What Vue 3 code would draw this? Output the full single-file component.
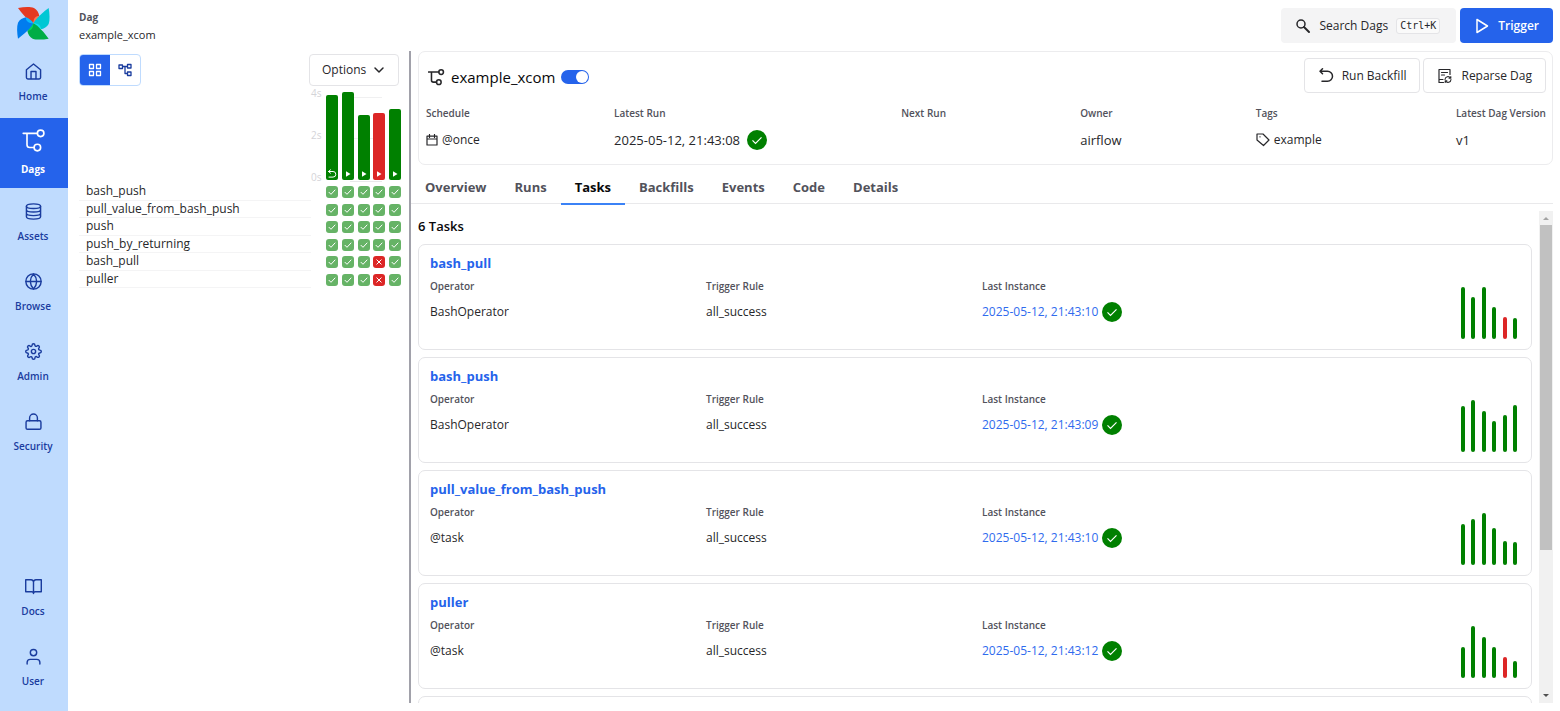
<script setup>
import { ref } from 'vue'

const enabled = ref(true)

const navTop = [
  { label: 'Home', icon: 'home' },
  { label: 'Dags', icon: 'dag' },
  { label: 'Assets', icon: 'assets' },
  { label: 'Browse', icon: 'browse' },
  { label: 'Admin', icon: 'admin' },
  { label: 'Security', icon: 'security' },
]
const navBottom = [
  { label: 'Docs', icon: 'docs' },
  { label: 'User', icon: 'user' },
]

const blades = [
  { angle: 0, dark: '#e43921', light: '#ff7557' },
  { angle: 90, dark: '#00c7d4', light: '#11e1ee' },
  { angle: 180, dark: '#00ad46', light: '#04d659' },
  { angle: 270, dark: '#017cee', light: '#0cb6ff' },
]

const runs = [
  { height: 85, state: 'ok', backfill: true },
  { height: 88, state: 'ok' },
  { height: 65, state: 'ok' },
  { height: 67, state: 'bad' },
  { height: 71, state: 'ok' },
]

const gridTasks = [
  { name: 'bash_push', states: [1, 1, 1, 1, 1] },
  { name: 'pull_value_from_bash_push', states: [1, 1, 1, 1, 1] },
  { name: 'push', states: [1, 1, 1, 1, 1] },
  { name: 'push_by_returning', states: [1, 1, 1, 1, 1] },
  { name: 'bash_pull', states: [1, 1, 1, 0, 1] },
  { name: 'puller', states: [1, 1, 1, 0, 1] },
]

const tabs = ['Overview', 'Runs', 'Tasks', 'Backfills', 'Events', 'Code', 'Details']

// Negative bar values mark failed runs.
const tasks = [
  { name: 'bash_pull', operator: 'BashOperator', last: '2025-05-12, 21:43:10', bars: [52, 42, 52, 32, -22, 21] },
  { name: 'bash_push', operator: 'BashOperator', last: '2025-05-12, 21:43:09', bars: [46, 52, 41, 31, 37, 47] },
  { name: 'pull_value_from_bash_push', operator: '@task', last: '2025-05-12, 21:43:10', bars: [41, 46, 52, 37, 24, 23] },
  { name: 'puller', operator: '@task', last: '2025-05-12, 21:43:12', bars: [31, 52, 41, 31, -21, 17] },
]
const pendingCards = 2
</script>

<template>
  <div class="app">
    <nav class="sidebar" aria-label="Main">
      <a href="#" class="logo" aria-label="Airflow">
        <svg viewBox="0 0 126 126" width="42" height="42">
          <g v-for="b in blades" :key="b.angle" :transform="`rotate(${b.angle} 64 64)`">
            <path :fill="b.dark" d="M64 64C56 60 42 50 18 18C36 15 54 14 66 18C75 23 80 32 82 42C74 43 68 52 64 64Z" />
            <path :fill="b.light" d="M64 64C64 50 70 41 82 42C78 51 72 60 64 64Z" />
          </g>
        </svg>
      </a>
      <template v-for="(group, gi) in [navTop, navBottom]" :key="gi">
        <div v-if="gi === 1" class="spacer"></div>
        <a v-for="item in group" :key="item.label" href="#" class="nav-item" :class="{ active: item.icon === 'dag' }">
          <svg v-if="item.icon === 'dag'" class="line" viewBox="-1 0 22 22" width="24" height="24">
            <path d="M1 4H14M4.500 4V14.500Q4.500 17 7 17H11" /><circle cx="17" cy="4" r="3" /><circle cx="14" cy="17" r="3" />
          </svg>
          <svg v-else class="line" viewBox="0 0 24 24" width="17" height="17">
            <template v-if="item.icon === 'home'">
              <path d="M2 9.500 12 1.500l10 8V20.500a2 2 0 0 1-2 2H4a2 2 0 0 1-2-2z" /><path d="M8.500 22V12h7v10" />
            </template>
            <template v-else-if="item.icon === 'assets'">
              <ellipse cx="12" cy="4.500" rx="10" ry="3.300" /><path d="M2 4.500v15c0 1.800 4.500 3.300 10 3.300s10-1.500 10-3.300v-15M2 9.500c0 1.800 4.500 3.300 10 3.300s10-1.500 10-3.300M2 14.500c0 1.800 4.500 3.300 10 3.300s10-1.500 10-3.300" />
            </template>
            <template v-else-if="item.icon === 'browse'">
              <circle cx="12" cy="12" r="10.800" /><path d="M1.500 12h21M12 1.500a16 16 0 0 1 4.500 10.500A16 16 0 0 1 12 22.500 16 16 0 0 1 7.500 12 16 16 0 0 1 12 1.500z" />
            </template>
            <template v-else-if="item.icon === 'admin'">
              <circle cx="12" cy="12" r="3" />
              <path d="M19.400 15a1.650 1.650 0 0 0 .33 1.820l.06.06a2 2 0 1 1-2.830 2.830l-.06-.06a1.650 1.650 0 0 0-1.820-.33 1.650 1.650 0 0 0-1 1.510V21a2 2 0 0 1-4 0v-.09A1.650 1.650 0 0 0 9 19.400a1.650 1.650 0 0 0-1.820.33l-.06.06a2 2 0 1 1-2.830-2.830l.06-.06a1.650 1.650 0 0 0 .33-1.820 1.650 1.650 0 0 0-1.510-1H3a2 2 0 0 1 0-4h.09A1.650 1.650 0 0 0 4.600 9a1.650 1.650 0 0 0-.33-1.820l-.06-.06a2 2 0 1 1 2.830-2.830l.06.06a1.650 1.650 0 0 0 1.820.33H9a1.650 1.650 0 0 0 1-1.510V3a2 2 0 0 1 4 0v.09a1.650 1.650 0 0 0 1 1.510 1.650 1.650 0 0 0 1.820-.33l.06-.06a2 2 0 1 1 2.830 2.830l-.06.06a1.650 1.650 0 0 0-.33 1.820V9a1.650 1.650 0 0 0 1.510 1H21a2 2 0 0 1 0 4h-.09a1.650 1.650 0 0 0-1.510 1z" />
            </template>
            <template v-else-if="item.icon === 'security'">
              <rect x="1.500" y="11" width="21" height="12" rx="2" /><path d="M6.500 11V7a5.500 5.500 0 0 1 11 0v4" />
            </template>
            <template v-else-if="item.icon === 'docs'">
              <path d="M12 5.500a3.500 3.500 0 0 0-3.500-3H1v17h8.500a2.500 2.500 0 0 1 2.500 2.500 2.500 2.500 0 0 1 2.500-2.500h8.500v-17h-7.500a3.500 3.500 0 0 0-3.500 3zV22" />
            </template>
            <template v-else>
              <circle cx="12" cy="6.500" r="4.500" /><path d="M3 22.500v-2a4.500 4.500 0 0 1 4.500-4.500h9a4.500 4.500 0 0 1 4.500 4.500v2" />
            </template>
          </svg>
          <span>{{ item.label }}</span>
        </a>
      </template>
    </nav>

    <main class="main">
      <header class="top">
        <div class="crumb">
          <strong>Dag</strong>
          <span>example_xcom</span>
        </div>
        <div class="top-actions">
          <button class="search">
            <svg class="line" viewBox="0 0 16 16" width="16" height="16"><circle cx="6" cy="6" r="4" stroke-width="1.500" /><path d="M9 9l5 5" stroke-width="2" /></svg>
            <span>Search Dags</span><kbd>Ctrl+K</kbd>
          </button>
          <button class="trigger">
            <svg class="line" viewBox="0 0 16 16" width="16" height="16"><path d="M3 1.500v13L13.500 8z" stroke-width="1.500" /></svg>
            <span>Trigger</span>
          </button>
        </div>
      </header>

      <div class="body">
        <section class="left" aria-label="Runs grid">
          <div class="toolbar">
            <div class="views">
              <button class="on" aria-label="Grid view">
                <svg class="line" viewBox="0 0 14 14" width="14" height="14"><path d="M1.500 1.500h4v4h-4zM8.500 1.500h4v4h-4zM1.500 8.500h4v4h-4zM8.500 8.500h4v4h-4z" stroke-width="1.300" /></svg>
              </button>
              <button aria-label="Graph view">
                <svg class="line" viewBox="0 0 14 14" width="14" height="14"><path d="M1 2h3.500v3.500H1zM9.500 1.500H13V5H9.500zM9.500 9H13v3.500H9.500zM4.500 3.500h5M7 3.500v7h2.500" stroke-width="1.300" /></svg>
              </button>
            </div>
            <button class="outline options">
              <span>Options</span>
              <svg class="line" viewBox="0 0 12 12" width="12" height="12"><path d="M2 4l4 4 4-4" stroke-width="1.500" /></svg>
            </button>
          </div>
          <div class="grid">
            <div class="names">
              <a v-for="t in gridTasks" :key="t.name" href="#">{{ t.name }}</a>
            </div>
            <div class="axis"><span>4s</span><span>2s</span><span>0s</span></div>
            <div class="runs">
              <div class="bars">
                <button v-for="(r, i) in runs" :key="i" class="bar" :class="r.state" :style="{ height: r.height + 'px' }" :aria-label="'Run ' + (i + 1)">
                  <svg v-if="r.backfill" class="line" viewBox="0 0 10 10" width="10" height="10"><path d="M3.500 .8L1.500 2.500l2 1.700M1.500 2.500h4.500a2.800 2.800 0 0 1 0 5.600H2" stroke-width="1" /></svg>
                  <svg v-else viewBox="0 0 10 10" width="10" height="10"><path d="M3 2.200v5.600L7.500 5z" fill="#fff" /></svg>
                </button>
              </div>
              <div v-for="t in gridTasks" :key="t.name" class="cells">
                <button v-for="(s, i) in t.states" :key="i" class="cell" :class="{ bad: !s }" :aria-label="t.name + (s ? ' success' : ' failed')">
                  <svg class="line" viewBox="0 0 12 12" width="12" height="12"><path :d="s ? 'M3 6.300l2 2 4-4.300' : 'M3.800 3.800l4.400 4.400M8.200 3.800l-4.400 4.400'" stroke-width="1" /></svg>
                </button>
              </div>
            </div>
          </div>
        </section>

        <section class="right">
          <div class="summary">
            <div class="title-row">
              <svg class="line" viewBox="0 0 22 22" width="17" height="17"><path d="M0.500 4H14M4.500 4V14.500Q4.500 17 7 17H11" /><circle cx="17" cy="4" r="3" /><circle cx="14" cy="17" r="3" /></svg>
              <h1>example_xcom</h1>
              <label class="switch"><input v-model="enabled" type="checkbox" aria-label="Dag enabled" /><i></i></label>
              <div class="actions">
                <button class="outline">
                  <svg class="line" viewBox="0 0 16 16" width="16" height="16"><path d="M4.500 .8L2 3.300l2.500 2.500M2 3.300h7.500a5 5 0 0 1 0 10H4" stroke-width="1.500" /></svg>
                  <span>Run Backfill</span>
                </button>
                <button class="outline">
                  <svg class="line" viewBox="0 0 16 16" width="16" height="16"><path d="M6.500 14.500H2v-13h11v5M4.500 4.500h6M4.500 7h3M2 11.500h4" stroke-width="1.200" /><path d="M8 11.500a3 3 0 0 1 5.500-1.500M14 11.500a3 3 0 0 1-5.500 1.500M13.800 8.500v1.700h-1.700M8.200 14.500v-1.700h1.700" stroke-width="1.100" /></svg>
                  <span>Reparse Dag</span>
                </button>
              </div>
            </div>
            <dl class="stats">
              <div><dt>Schedule</dt><dd class="small"><svg class="line" viewBox="0 0 12 12" width="12" height="12"><path d="M1 2.200h10V11H1zM1 5h10M3.500 .5v3M8.500 .5v3" stroke-width="1.200" /></svg><span>@once</span></dd></div>
              <div><dt>Latest Run</dt><dd><span class="date">2025-05-12, 21:43:08</span><svg class="ok-dot" viewBox="0 0 20 20" width="20" height="20"><circle cx="10" cy="10" r="10" /><path d="M5.500 10.300l3 3 6-6" /></svg></dd></div>
              <div><dt>Next Run</dt><dd></dd></div>
              <div><dt>Owner</dt><dd>airflow</dd></div>
              <div><dt>Tags</dt><dd class="small"><svg class="line" viewBox="0 0 14 14" width="14" height="14"><path d="M1 1h6l6 6-5.500 5.500L1 7zM3.900 3.800h.2" stroke-width="1.200" /></svg><span>example</span></dd></div>
              <div><dt>Latest Dag Version</dt><dd>v1</dd></div>
            </dl>
          </div>

          <nav class="tabs" aria-label="Dag sections">
            <a v-for="t in tabs" :key="t" href="#" :class="{ active: t === 'Tasks' }">{{ t }}</a>
          </nav>

          <div class="scroller">
            <div class="list">
              <h2>6 Tasks</h2>
              <article v-for="t in tasks" :key="t.name" class="card">
                <a href="#" class="task-link">{{ t.name }}</a>
                <div class="cols">
                  <div><h3>Operator</h3><p>{{ t.operator }}</p></div>
                  <div><h3>Trigger Rule</h3><p>all_success</p></div>
                  <div><h3>Last Instance</h3><p><a href="#">{{ t.last }}</a><svg class="ok-dot" viewBox="0 0 20 20" width="20" height="20"><circle cx="10" cy="10" r="10" /><path d="M5.500 10.300l3 3 6-6" /></svg></p></div>
                  <div class="mini"><i v-for="(b, i) in t.bars" :key="i" :class="{ bad: b < 0 }" :style="{ height: Math.abs(b) + 'px' }"></i></div>
                </div>
              </article>
              <div v-for="n in pendingCards" :key="n" class="card" aria-hidden="true"></div>
            </div>
            <div class="scrollbar" aria-hidden="true">
              <svg viewBox="0 0 14 14" width="14" height="14"><path d="M4 9h6L7 6z" fill="#a3a3a3" /></svg>
              <div class="track"><div class="thumb"></div></div>
              <svg viewBox="0 0 14 14" width="14" height="14"><path d="M4 5h6L7 8z" fill="#505050" /></svg>
            </div>
          </div>
        </section>
      </div>
    </main>
  </div>
</template>

<style>
body {
  background: #fff;
}
</style>

<style scoped>
* {
  box-sizing: border-box;
}
.app {
  display: flex;
  height: 100vh;
  overflow: hidden;
  font: 12px/18px "Open Sans", "Noto Sans", sans-serif;
  color: #27272a;
}
a {
  color: inherit;
  text-decoration: none;
}
button {
  font: inherit;
  color: inherit;
  padding: 0;
  border: 0;
  background: none;
}
h1, h2, h3, p, dl, dd {
  margin: 0;
}
svg {
  flex: none;
  display: block;
}
.line {
  fill: none;
  stroke: currentColor;
  stroke-width: 2;
  stroke-linecap: round;
  stroke-linejoin: round;
}
.sidebar {
  flex: none;
  width: 68px;
  display: flex;
  flex-direction: column;
  background: #bfdbfe;
  color: #1a3c9e;
  padding-bottom: 8px;
}
.logo {
  height: 48px;
  padding: 2px 12px;
}
.nav-item {
  height: 70px;
  display: flex;
  flex-direction: column;
  align-items: center;
  justify-content: center;
  gap: 8px;
  padding-right: 2px;
  font-size: 10px;
  line-height: 16px;
  font-weight: 600;
}
.nav-item.active {
  background: #2563eb;
  color: #fff;
  font-weight: 700;
}
.nav-item.active .line {
  stroke-width: 1.500;
}
.spacer {
  flex: 1;
}
.main {
  flex: 1;
  min-width: 0;
  display: flex;
  flex-direction: column;
  padding: 8px 7px 8px 8px;
}
.top {
  display: flex;
  justify-content: space-between;
  height: 43px;
}
.crumb {
  display: flex;
  flex-direction: column;
  padding-left: 3px;
  font-size: 11px;
}
.crumb strong {
  font-size: 10px;
  font-weight: 700;
  color: #52525b;
}
.top-actions {
  display: flex;
  gap: 4px;
  height: 35px;
  font-weight: 500;
}
.search {
  display: flex;
  align-items: center;
  gap: 8px;
  padding: 0 16px 0 14px;
  background: #f4f4f5;
  border-radius: 4px;
}
kbd {
  font: 10px/14px "DejaVu Sans Mono", monospace;
  padding: 0 3px;
  border: 1px solid #e4e4e7;
  border-radius: 3px;
  background: #fafafa;
}
.trigger {
  display: flex;
  align-items: center;
  gap: 8px;
  padding: 0 14px;
  background: #2563eb;
  color: #fff;
  border-radius: 4px;
  font-weight: 600;
}
.body {
  flex: 1;
  min-height: 0;
  display: flex;
}
.left {
  flex: none;
  width: 335px;
  padding: 3px 8px 0 3px;
  border-right: 2px solid #a1a1aa;
}
.toolbar {
  display: flex;
  justify-content: space-between;
  padding-right: 2px;
}
.views {
  display: flex;
  height: 32px;
  border: 1px solid #bfdbfe;
  border-radius: 4px;
  overflow: hidden;
}
.views button {
  width: 30px;
  display: grid;
  place-items: center;
  color: #1a3c9e;
}
.views .on {
  background: #2563eb;
  color: #fff;
}
.outline {
  display: flex;
  align-items: center;
  border: 1px solid #e4e4e7;
  border-radius: 4px;
  font-weight: 500;
}
.options {
  height: 32px;
  width: 90px;
  padding: 0 13px 0 12px;
  justify-content: space-between;
}
.grid {
  display: flex;
  align-items: flex-end;
}
.names {
  flex: 1;
  display: grid;
  grid-template-rows: repeat(6, 1fr);
  height: 105px;
}
.names a {
  padding-left: 7px;
  line-height: 16px;
  border-bottom: 1px solid #f4f4f5;
}
.axis {
  align-self: flex-start;
  width: 15px;
  height: 98px;
  display: flex;
  flex-direction: column;
  justify-content: space-between;
  font-size: 10px;
  line-height: 14px;
  color: #d4d4d8;
}
.runs {
  width: 75px;
}
.bars {
  display: flex;
  justify-content: space-between;
  align-items: flex-end;
  height: 97px;
  padding-bottom: 3px;
  background: linear-gradient(#f0f0f1, #f0f0f1) 28px 11px / 28px 1px no-repeat, linear-gradient(#f0f0f1, #f0f0f1) 28px 52px / 28px 1px no-repeat, linear-gradient(#e8e8ea, #e8e8ea) 24px 95px / 32px 1px no-repeat;
}
.bar {
  width: 12px;
  display: flex;
  align-items: flex-end;
  justify-content: center;
  padding-bottom: 1px;
  border-radius: 2px;
  background: #008000;
  color: #fff;
}
.bar.bad {
  background: #dc2626;
}
.cells {
  display: flex;
  justify-content: space-between;
  align-items: center;
  height: 17px;
}
.cells:nth-child(even) {
  height: 18px;
}
.cell {
  width: 12px;
  height: 12px;
  border-radius: 3px;
  background: #66b366;
  color: #fff;
}
.cell.bad {
  background: #dc2626;
}
.right {
  flex: 1;
  min-width: 0;
  display: flex;
  flex-direction: column;
}
.summary {
  margin-left: 7px;
  height: 114px;
  padding: 6px 6px 0 7px;
  border: 1px solid #ececee;
  border-radius: 7px;
}
.title-row {
  display: flex;
  align-items: center;
  height: 38px;
  padding-left: 2px;
}
h1 {
  margin: 0 6px;
  font-size: 15px;
  line-height: 22px;
  font-weight: 500;
  color: #09090b;
}
.switch {
  position: relative;
  display: block;
  width: 28px;
  height: 14px;
}
.switch input {
  position: absolute;
  inset: 0;
  margin: 0;
  opacity: 0;
}
.switch i {
  display: block;
  height: 14px;
  border-radius: 7px;
  background: #a1a1aa;
  padding: 1px;
}
.switch i::after {
  content: "";
  display: block;
  width: 12px;
  height: 12px;
  border-radius: 6px;
  background: #fff;
}
.switch input:checked + i {
  background: #2563eb;
  padding-left: 15px;
}
.actions {
  margin-left: auto;
  align-self: flex-start;
  display: flex;
  gap: 3px;
}
.actions .outline {
  height: 35px;
  gap: 8px;
  padding: 0 13px;
}
.stats {
  display: flex;
  justify-content: space-between;
  margin-top: 8px;
}
dt, h3 {
  font-size: 10px;
  line-height: 18px;
  font-weight: 600;
  color: #52525b;
}
dd {
  display: flex;
  align-items: center;
  gap: 7px;
  height: 20px;
  margin-top: 8px;
  font-size: 13px;
}
dd.small {
  gap: 4px;
  font-size: 12px;
}
.ok-dot {
  fill: #008000;
}
.ok-dot path {
  fill: none;
  stroke: #fff;
  stroke-width: 1.200;
}
.tabs {
  flex: none;
  display: flex;
  height: 39px;
  border-bottom: 1px solid #e9e9eb;
  font-size: 13px;
  line-height: 20px;
  font-weight: 700;
  color: #52525b;
}
.tabs a {
  height: 40px;
  padding: 12px 14px 0;
}
.tabs .active {
  border-bottom: 2px solid #3b82f6;
  color: #09090b;
}
.scroller {
  flex: 1;
  min-height: 0;
  display: flex;
  padding: 7px 0 0 7px;
}
.list {
  flex: 1;
  min-width: 0;
  overflow-y: auto;
  scrollbar-width: none;
  margin-right: 7px;
}
h2 {
  margin: 5px 0 8px;
  font-size: 13px;
  line-height: 20px;
  font-weight: 600;
  color: #09090b;
}
.card {
  height: 106px;
  margin-bottom: 7px;
  padding: 8px 11px 0;
  border: 1px solid #e4e4e7;
  border-radius: 7px;
}
.task-link {
  display: block;
  width: max-content;
  font-size: 13px;
  line-height: 20px;
  font-weight: 700;
  color: #2563eb;
}
.cols {
  display: grid;
  grid-template-columns: repeat(4, 1fr);
  gap: 14px;
}
.cols h3 {
  margin-top: 4px;
}
.cols > div {
  display: flow-root;
}
.cols p {
  display: flex;
  align-items: center;
  gap: 4px;
  height: 20px;
  margin-top: 7px;
}
.cols p a {
  color: #2f6bee;
}
.cols .mini {
  display: flex;
  justify-content: space-between;
  align-items: flex-end;
  width: 56px;
  height: 66px;
  margin: 0 3px 0 auto;
}
.mini i {
  width: 4px;
  border-radius: 2px;
  background: #008000;
}
.mini .bad {
  background: #dc2626;
}
.scrollbar {
  width: 14px;
  display: flex;
  flex-direction: column;
  background: #f1f1f1;
}
.track {
  flex: 1;
  padding: 0 1px;
}
.thumb {
  height: 70%;
  background: #c1c1c1;
}
</style>
